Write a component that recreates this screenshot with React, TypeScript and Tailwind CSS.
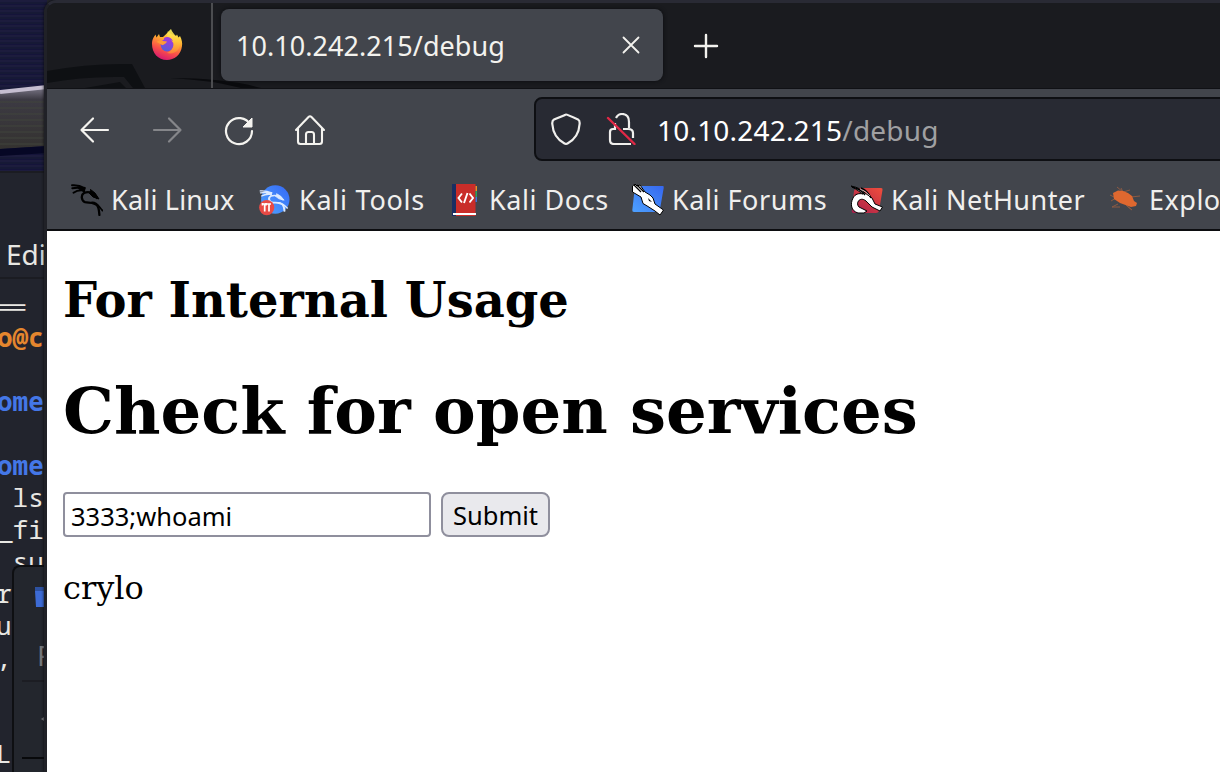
import type { ReactNode } from "react";

function FirefoxIcon() {
  return (
    <svg className="h-8 w-8" viewBox="0 0 32 32">
      <defs>
        <linearGradient id="fox" x1="0.75" y1="0" x2="0.35" y2="1">
          <stop offset="0" stopColor="#fff44f" />
          <stop offset="0.35" stopColor="#ffa930" />
          <stop offset="0.68" stopColor="#fb5148" />
          <stop offset="1" stopColor="#d51872" />
        </linearGradient>
        <linearGradient id="flame" x1="0.5" y1="0" x2="0.5" y2="1">
          <stop offset="0" stopColor="#fff65a" />
          <stop offset="0.5" stopColor="#ffc83c" />
          <stop offset="1" stopColor="#fd8239" />
        </linearGradient>
        <linearGradient id="globe" x1="0.7" y1="0" x2="0.3" y2="1">
          <stop offset="0" stopColor="#a436e0" />
          <stop offset="1" stopColor="#5360d5" />
        </linearGradient>
      </defs>
      <path d="M1 16C1 11 3 9 4.500 6.500L5.500 9.500L8 6L9 9L12 9C14 7 17 5 17 3L20 6L25 8L26 6.500L27.500 9.500L29 8C31 12 31.500 15 31 18C30 27 23 32 16 32C7 32 1 25 1 16Z" fill="url(#fox)" />
      <path d="M20 1C15 5 15 10 20 13C25 16 21 23 16 25C24 27 30 21 29 14C28 9 22 7 20 1Z" fill="url(#flame)" opacity="0.9" />
      <circle cx="16" cy="17" r="6.400" fill="url(#globe)" />
      <path d="M5.500 14C8 12 10 12 12 13L16 13.500C15 16 13 16 12 17C10 17 9 15 5.500 14Z" fill="#ff9a35" />
      <path d="M13 10C16 8 20 9 22 13C18 11 16 12 13 12Z" fill="#9b40dc" />
    </svg>
  );
}

function Dragon({ color }: { color: string }) {
  return (
    <g fill="none" stroke={color} strokeLinecap="round" strokeLinejoin="round">
      <path d="M1 1.300Q8 .8 13.500 4M1.300 4.300Q8 2.800 13 5M2.500 8.700Q7 5.500 13 6.500" strokeWidth="1.900" />
      <path d="M7 3L13 5L12 7L8 5Z" fill={color} strokeWidth="1" />
      <path d="M13.500 4L12.800 7M26 14C23 8 17 7 13 9C9.500 11 10.500 17 14 18.200C19 19 24 18 26.500 22C28 24 28 27 28.400 31" strokeWidth="2.300" />
      <path d="M19.500 5.500L24 9L28 15L22 13L18 9" fill={color} strokeWidth="1" />
      <path d="M21 18.500C26 18 28 23 31.500 26.500" strokeWidth="1.800" />
    </g>
  );
}

function LinuxIcon() {
  return <svg className="size-8" viewBox="0 0 32 32"><Dragon color="#000" /></svg>;
}

function ToolsIcon() {
  return (
    <svg className="size-8" viewBox="0 0 32 32">
      <defs><linearGradient id="tools" x1="0" y1="1" x2="1" y2="0"><stop stopColor="#50a5ff" /><stop offset="1" stopColor="#3568f5" /></linearGradient></defs>
      <circle cx="16.300" cy="15.500" r="14.200" fill="url(#tools)" />
      <g transform="translate(.5 6) scale(.88 .68)"><Dragon color="#dceaff" /></g>
      <circle cx="7.700" cy="23.600" r="7.600" fill="#e84a45" />
      <path d="M4 20H12M5.700 20V27.500M10 20V27.500M3.500 19V21.500M7 19V21.500" stroke="#fff" strokeWidth="1.700" />
    </svg>
  );
}

function DocsIcon() {
  return (
    <svg className="size-8" viewBox="0 0 32 32">
      <g transform="translate(-1 0)">
        <path d="M4 0H27.500V32H4Z" fill="#c92d29" />
        <path d="M4 0H8V32H4Z" fill="#1a2e62" />
        <path d="M27.500 2H29V7H27.500Z" fill="#f18a26" /><path d="M27.500 7H29V13H27.500Z" fill="#28a35d" /><path d="M27.500 13H29V18H27.500Z" fill="#4275d8" />
        <path d="M5 29H28V31H5Z" fill="#fff" />
        <path d="M14 9.500L10.500 14L14 18.500M21.500 9.500L25 14L21.500 18.500M19.500 9L16 19" fill="none" stroke="#fff" strokeWidth="1.900" />
      </g>
    </svg>
  );
}

function ForumsIcon() {
  return (
    <svg className="size-8" viewBox="0 0 32 32">
      <defs><linearGradient id="forum" x1="0" y1="1" x2="1" y2="0"><stop stopColor="#4da1ff" /><stop offset="1" stopColor="#3667ef" /></linearGradient></defs>
      <path d="M3 2H31Q32 2 31.700 4L27.500 28H2Q0 28 .3 26Z" fill="url(#forum)" />
      <path d="M.5 2L3 0L5 2L8 1L13 8Q19 11 21 14L23 20L31.500 26L28 31L23 27L16 22.500L11 19.500L9 13L.5 8Z" fill="#fff" stroke="#000" strokeWidth="1" />
      <path d="M2 1L9 8M5 1L12 8" fill="none" stroke="#000" strokeWidth="1.300" />
      <path d="M16 14L20 18L17 17Z" fill="#000" />
    </svg>
  );
}

function NetHunterIcon() {
  return (
    <svg className="size-8" viewBox="0 0 32 32">
      <defs><linearGradient id="hunter" x1="0" y1="1" x2="1" y2="0"><stop stopColor="#a61d4c" /><stop offset="1" stopColor="#f04e3c" /></linearGradient></defs>
      <path d="M7 4H30Q32 4 31.500 6L28 27Q27 29 25 29H3Q0 29 1 26L3 7Q4 4 7 4Z" fill="url(#hunter)" />
      <path d="M0 2Q10 4 14 9L21 14L24 20L31.500 23L29 27L21 23L15 17C9 12 4 19 8 23L16 27L13 29H7C0 27-1 20 2 14C4 10 8 9 12 10Z" fill="#fff" stroke="#000" strokeWidth="1" />
      <path d="M1 3Q10 5 14 11M10 4Q17 7 20 14" fill="none" stroke="#000" strokeWidth="1.500" />
      <path d="M9 5Q15 7 19 12" fill="none" stroke="#fff" strokeWidth=".7" />
    </svg>
  );
}

function BugIcon() {
  return (
    <svg className="size-8" viewBox="0 0 32 32">
      <path d="M8 3L14 8L21 6M14 8L12 4M1 11L7 14L2 17M9 20L3 23H11M22 13L31 12M17 21L23 26L18 22" fill="none" stroke="#8d5a43" strokeWidth="1" />
      <path d="M4 9L9 6.500L14 7L19 9L23 12L25 17L28 19L27 22L22 23L11 19L5 15Z" fill="#e0682f" />
    </svg>
  );
}

const bookmarks: { label: string; icon: ReactNode; width: string; spacing: string }[] = [
  { label: "Kali Linux", icon: <LinuxIcon />, width: "w-[188px]", spacing: "tracking-[0.2px]" },
  { label: "Kali Tools", icon: <ToolsIcon />, width: "w-[190px]", spacing: "tracking-[0.75px]" },
  { label: "Kali Docs", icon: <DocsIcon />, width: "w-[183px]", spacing: "tracking-[0.55px]" },
  { label: "Kali Forums", icon: <ForumsIcon />, width: "w-[219px]", spacing: "tracking-[0.55px]" },
  { label: "Kali NetHunter", icon: <NetHunterIcon />, width: "w-[258px]", spacing: "tracking-[0.45px]" },
  { label: "Exploit-DB", icon: <BugIcon />, width: "w-[190px]", spacing: "tracking-[0.5px]" },
];

function Desktop() {
  return (
    <div className="flex h-full w-[47px] flex-col overflow-hidden bg-[#22242d] whitespace-pre font-['Noto_Sans_Mono','DejaVu_Sans_Mono',monospace] text-[#e8e7e3]">
      <svg className="block h-[171px] w-[47px] shrink-0" viewBox="0 0 47 171">
        <defs>
          <pattern id="scan" width="47" height="5" patternUnits="userSpaceOnUse"><path d="M0 1H47" stroke="#24233f" /><path d="M0 3H47" stroke="#171d32" /></pattern>
          <linearGradient id="glare" x1="0" y1="0" x2="0" y2="1"><stop stopColor="#7d798a" /><stop offset=".2" stopColor="#3c3a43" /><stop offset="1" stopColor="#343230" /></linearGradient>
        </defs>
        <path d="M0 0H47V171H0Z" fill="#15143a" /><path d="M0 0H47V171H0Z" fill="url(#scan)" />
        <path d="M0 92L47 87V146L0 149Z" fill="url(#glare)" />
        <path d="M0 92L47 87" stroke="#c5bed0" strokeWidth="4" />
        <path d="M0 102H47M0 108H47M0 114H47M0 120H47M0 126H47M0 132H47M0 138H47M0 144H47" stroke="#41443c" />
        <path d="M0 149L47 146V153L0 156Z" fill="#060725" />
      </svg>
      <div className="flex h-[108px] shrink-0 items-end border-y-2 border-[#1b1c22] pb-1 pl-[6px] font-['Noto_Sans',sans-serif] text-[28px] leading-[38px]">Edit</div>
      <div className="-ml-[6px] h-[42px] shrink-0 pt-[12px] text-[26px] leading-[32px]">══</div>
      <div className="-ml-[3px] h-8 shrink-0 text-[26px] leading-8 font-bold text-[#e4862e]">o@c</div>
      <div className="h-8 shrink-0" />
      <div className="-ml-[3px] h-8 shrink-0 text-[26px] leading-8 font-bold text-[#4477e7]">ome</div>
      <div className="h-8 shrink-0" />
      <div className="-ml-[3px] h-8 shrink-0 text-[26px] leading-8 font-bold text-[#4477e7]">ome</div>
      <div className="-ml-[3px] h-8 shrink-0 text-[26px] leading-8"> ls</div>
      <div className="-ml-[3px] h-8 shrink-0 text-[26px] leading-8">_fi</div>
      <div className="-ml-[3px] h-[20px] shrink-0 overflow-hidden text-[26px] leading-8"> su</div>
      <div className="flex min-h-0 grow">
        <div className="w-[12px] shrink-0 overflow-hidden pt-[12px] text-[26px] leading-8">
          <div className="-ml-[4px]">r</div><div className="-ml-[4px]">u</div><div className="-ml-[4px]">,</div><div className="h-8" /><div className="h-8" /><div className="-ml-[4px]">L</div>
        </div>
        <div className="w-9 shrink-0 rounded-tl-lg border-t-2 border-l-2 border-[#0e0f12] bg-[#23262d] pl-[8px]">
          <svg className="ml-[13px] mt-[20px] h-5 w-4" viewBox="0 0 16 20"><path d="M0 0H16V4H0Z" fill="#2d51a0" /><path d="M0 4H16V20H1Z" fill="#3d6bd5" /></svg>
          <div className="h-[75px] border-b-2 border-[#1c1d23] pt-[28px] pl-[15px] font-['Noto_Sans',sans-serif] text-[28px] leading-[40px] text-[#77787b]">F</div>
          <div className="h-[77px] border-b-2 border-[#08090b] pt-[33px] pl-[18px]">
            <svg className="h-2 w-2" viewBox="0 0 8 8"><path d="M1 4L7 0V8Z" fill="#77787b" /></svg>
          </div>
        </div>
      </div>
    </div>
  );
}

function TabBar() {
  return (
    <div className="relative h-[86px] border-b border-[#101115] bg-[#1a1b1f]">
      <svg className="absolute inset-0 h-[85px] w-[240px]" viewBox="0 0 240 85">
        <path d="M0 68Q42 60 85 61L98 85H86L77 74Q37 73 0 80Z" fill="#0e1013" />
        <path d="M38 85L73 79L79 85Z" fill="#0e1013" />
        <path d="M123 75Q179 75 214 85H194Q164 77 123 75Z" fill="#0a0b0e" />
      </svg>
      <div className="relative flex h-full">
        <div className="flex w-[166px] shrink-0 justify-end border-r-2 border-[#4c4d50] pt-[25px] pr-[28px]"><FirefoxIcon /></div>
        <div className="mt-[6px] ml-[8px] flex h-[72px] w-[442px] items-center justify-between rounded-lg bg-[#42454c] pr-[22px] pl-[15px] text-[#f3f2ee] shadow-[0_0_4px_#0b0c0f]">
          <span className="pt-[2px] text-[27px] leading-[40px] tracking-[0.05px]">10.10.242.215/debug</span>
          <svg className="size-5" viewBox="0 0 20 20"><path d="M2.500 2.500L17.500 17.500M17.500 2.500L2.500 17.500" stroke="#f3f2ee" strokeWidth="1.800" strokeLinecap="round" /></svg>
        </div>
        <svg className="mt-[30px] ml-[30px] size-[26px]" viewBox="0 0 26 26"><path d="M2 13H24M13 2V24" stroke="#f3f2ee" strokeWidth="2.400" strokeLinecap="round" /></svg>
      </div>
    </div>
  );
}

function Navigation() {
  return (
    <div className="flex h-[81px] bg-[#42454c]">
      <div className="flex h-[82px] w-[487px] shrink-0 items-center pl-[32px]">
        <svg className="size-8" viewBox="0 0 32 32"><path d="M29 16H3M14 4.500L2.500 16L14 27.500" fill="none" stroke="#f4f3ef" strokeWidth="2.200" strokeLinecap="round" strokeLinejoin="round" /></svg>
        <svg className="ml-[40px] size-8" viewBox="0 0 32 32"><path d="M3 16H29M18 4.500L29.500 16L18 27.500" fill="none" stroke="#85868a" strokeWidth="2.200" strokeLinecap="round" strokeLinejoin="round" /></svg>
        <svg className="ml-[40px] size-8" viewBox="0 0 32 32"><path d="M27.500 11A13 13 0 1 0 29 17" fill="none" stroke="#f4f3ef" strokeWidth="2.200" strokeLinecap="round" /><path d="M29 4V13H20Z" fill="#f4f3ef" stroke="#f4f3ef" strokeLinejoin="round" /></svg>
        <svg className="ml-[39px] size-8" viewBox="0 0 32 32"><path d="M2 16L14.500 3Q16 1.500 17.500 3L30 16M4 14V27.500Q4 30 6.500 30H25.500Q28 30 28 27.500V14M12 30V20.500Q12 18 14.500 18H17.500Q20 18 20 20.500V30" fill="none" stroke="#f4f3ef" strokeWidth="2.100" strokeLinecap="round" strokeLinejoin="round" /></svg>
      </div>
      <div className="mt-2 flex h-16 w-[740px] shrink-0 items-center rounded-lg border-2 border-[#0e0f13] bg-[#282a33] pl-[14px]">
        <svg className="size-8" viewBox="0 0 32 32"><path d="M16 1.500Q17 1.500 28 6.500Q30 7.500 29.600 11C29 21 24 27 17.500 30.500Q16 31.300 14.500 30.500C8 27 3 21 2.300 11Q2 7.500 4 6.500L15 2Q15.500 1.500 16 1.500Z" fill="none" stroke="#f0efed" strokeWidth="2.200" /></svg>
        <svg className="ml-[24px] size-8" viewBox="0 0 32 32"><path d="M10 5Q12 1 16 1Q23 1 23 9V15M9 10V16H7Q4 16 4 19V27Q4 31 8 31H25M17 16H22Q27 16 27 20V25" fill="none" stroke="#f0efed" strokeWidth="2.200" /><path d="M2 5L28.500 31" stroke="#e12846" strokeWidth="2.400" strokeLinecap="round" /></svg>
        <span className="ml-[19px] pt-[2px] text-[28px] leading-[40px] tracking-[0.2px] text-white">10.10.242.215<span className="text-[#a0a0a2]">/debug</span></span>
      </div>
    </div>
  );
}

function BrowserPage() {
  return (
    <main className="flex h-[541px] flex-col bg-white px-4 font-['DejaVu_Serif',serif] text-black">
      <h2 className="mt-[41px] text-[48px] leading-[57px] font-bold">For Internal Usage</h2>
      <h1 className="mt-[44px] text-[64px] leading-[75px] font-bold">Check for open services</h1>
      <form className="mt-[44px] flex gap-[10px] font-['Noto_Sans',sans-serif]" onSubmit={(event) => event.preventDefault()}>
        <input aria-label="Port" defaultValue="3333;whoami" className="h-[45px] w-[368px] rounded border-2 border-[#8f8f9d] px-[6px] pt-[3px] text-[25.5px] outline-none" />
        <button className="h-[45px] w-[109px] rounded-lg border-2 border-[#8f8f9d] bg-[#e9e9ed] pt-[2px] text-[25.5px] leading-[39px]">Submit</button>
      </form>
      <p className="mt-[32px] text-[32px] leading-[38px]">crylo</p>
    </main>
  );
}

export default function App() {
  return (
    <div className="relative h-[772px] w-[1220px] overflow-hidden bg-[#22242d]">
      <Desktop />
      <div className="absolute top-0 left-[44px] flex h-[772px] w-[1176px] flex-col overflow-hidden rounded-tl-xl border-t-[3px] border-l-[3px] border-t-[#292a34] border-l-[#202127] bg-[#1a1b1f] font-['Noto_Sans',sans-serif] shadow-[0_0_3px_#090a0d]">
        <TabBar />
        <Navigation />
        <nav className="flex h-[61px] shrink-0 items-center border-b-2 border-[#0c0d10] bg-[#42454c] pl-[24px]">
          {bookmarks.map((bookmark) => (
            <div key={bookmark.label} className={`flex shrink-0 items-center gap-2 ${bookmark.width}`}>
              {bookmark.icon}<span className={`whitespace-nowrap text-[27px] leading-[40px] text-[#f0efed] ${bookmark.spacing}`}>{bookmark.label}</span>
            </div>
          ))}
        </nav>
        <BrowserPage />
      </div>
    </div>
  );
}
